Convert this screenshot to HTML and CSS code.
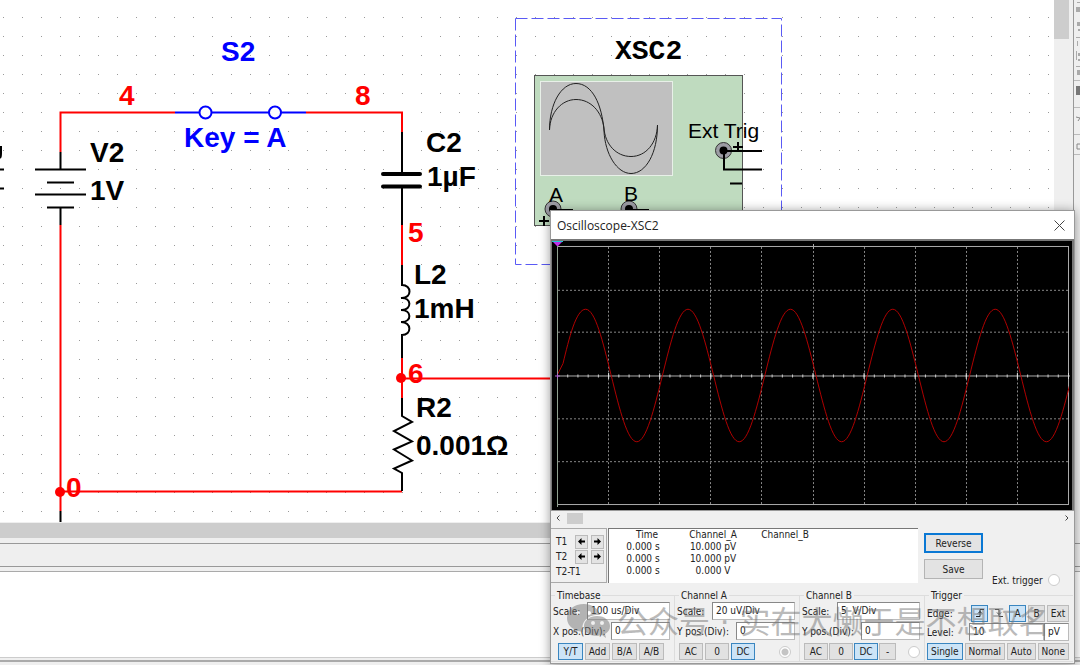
FILE: index.html
```html
<!DOCTYPE html>
<html lang="zh-Hans">
<head>
  <meta charset="UTF-8" />
  <meta name="viewport" content="width=device-width, initial-scale=1.0"/>
  <title>Oscilloscope-XSC2</title>
  <link rel="stylesheet" href="styles.css">
</head>
<body>

<main class="workspace">
  <div class="canvas">
    <svg class="schematic" width="800" height="522" viewBox="0 0 800 522">
      <!-- wires -->
      <g class="wire">
        <path d="M175 112.5H60.5V152M306 112.5H402V132M402 225V265M402 358V398M401 378.5H560M60.5 225V511M60 491.5H402"/>
      </g>
      <circle cx="401" cy="378" r="5" fill="#f00"/>
      <circle cx="60" cy="492" r="5" fill="#f00"/>

      <!-- switch -->
      <g class="switch">
        <path d="M175 112.5H306"/>
        <circle cx="205.5" cy="112.5" r="6"/>
        <circle cx="275" cy="112.5" r="6"/>
      </g>

      <!-- battery, capacitor, inductor, resistor -->
      <g class="part">
        <path d="M60.5 152V169M35 169.5H86M47 182.500H74M35 194.500H86M47 207.500H74M60.5 207V225M60.5 511V522"/>
        <path d="M0 169.500H4M0 188.500H4M0 158Q1 157 1 153V146"/>
        <path d="M402 132V172M402 188V225"/>
        <path class="plate" d="M383 174H420M383 186.500H420"/>
        <path d="M402 265V285C412 285 412 298 402 298H401C412 297 412 310 402 310H401C412 310 412 322 402 322H401C412 322 412 335 402 335V358"/>
        <path d="M402 398V416L412 422L394 431L412 441.500L394 449.500L412 460.500L394 468.500L402 473V491"/>
      </g>

      <g class="label blue">
        <text x="221" y="61">S2</text>
        <text x="184" y="147">Key = A</text>
      </g>
      <g class="label red">
        <text x="119" y="105">4</text>
        <text x="355" y="105">8</text>
        <text x="408" y="242">5</text>
        <text x="408" y="383">6</text>
        <text x="66" y="497">0</text>
      </g>
      <g class="label">
        <text x="90" y="162">V2</text>
        <text x="90" y="200">1V</text>
        <text x="426" y="152">C2</text>
        <text x="427" y="186">1µF</text>
        <text x="414" y="284">L2</text>
        <text x="414" y="318">1mH</text>
        <text x="416" y="417">R2</text>
        <text x="416" y="455">0.001Ω</text>
      </g>

      <!-- oscilloscope symbol -->
      <path class="selection" d="M515.5 18.500H781.500V264.500M515.5 18.500V264.500H781.500"/>
      <text class="label mono" x="615" y="59">XSC2</text>
      <rect x="534.5" y="75.500" width="208" height="150" fill="#bfdbbf" stroke="#555"/>
      <rect x="540.5" y="81.500" width="132" height="94" fill="#c0c0c0" stroke="#e8f0e8"/>
      <g fill="none" stroke="#222">
        <path d="M549.500 130C549.500 104 561 83.500 576 83.500C592 83.500 602 104 604 131C605 154 617 173.500 631 173.500C646 173.500 657.500 153 657.500 125"/>
        <path d="M549.500 130C550 112 562 99.500 576 99.500C591 99.500 602 112 604 128C605 144 616 156.500 631 156.500C646 156.500 657 143 657.500 125"/>
      </g>
      <g fill="#9c9ca4" stroke="#333">
        <circle cx="723.500" cy="150.500" r="8"/>
        <circle cx="553" cy="209" r="8"/>
        <circle cx="629" cy="209" r="8"/>
      </g>
      <circle cx="723.500" cy="150.500" r="4"/>
      <circle cx="553" cy="209" r="4"/>
      <circle cx="629" cy="209" r="4"/>
      <g class="part">
        <path d="M724 151H762M724 151V169.500H762M733 147H743M738 142V152M730 183.500H742M553 210H573M629 210H649M539 221H549M544 216V226"/>
      </g>
      <g class="pin">
        <text x="688" y="138">Ext Trig</text>
        <text x="549" y="202">A</text>
        <text x="624" y="201">B</text>
      </g>
    </svg>
  </div>
  <div class="vscroll"><div class="vthumb"></div></div>
  <svg class="toolbar" width="6" height="522" viewBox="0 0 6 522">
    <g fill="#aaa">
      <path d="M3 2h3v1h-3zM2 7h4v5h-4zM3 22h3v4h-3zM4 29h2v2h-2zM2 37h4v1h-4zM3 41h1v5h-1zM2 51h1v9h-1zM4 53h2v3h-2zM4 59h2v2h-2zM2 66h4v1h-4zM3 70h3v5h-3z"/>
      <path d="M2 86h4v9h-4z" fill="#777"/>
    </g>
    <path d="M0 80.500H6M0 107.500H6M0 134.500H6M0 154.500H6" stroke="#bbb"/>
    <path d="M2 117L6 118L4 121M6 144H3V149H6" fill="none" stroke="#888"/>
  </svg>
</main>
<div class="hscroll"><div class="hthumb"></div></div>
<div class="tabs"></div>
<div class="output"></div>
<div class="status"></div>

<section class="scope">
  <header class="titlebar">
    <h1>Oscilloscope-XSC2</h1>
    <button class="close" aria-label="Close">
      <svg width="11" height="11" viewBox="0 0 11 11"><path d="M.5 .5L10.500 10.500M10.500 .5L.5 10.500" stroke="#444"/></svg>
    </button>
  </header>

  <svg class="screen" viewBox="0 0 520 270" preserveAspectRatio="none">
    <defs>
      <clipPath id="plot"><rect x="5" y="5" width="512" height="260"/></clipPath>
    </defs>
    <g class="grid">
      <path d="M56.500 6V264M107.500 6V264M158.500 6V264M209.500 6V264M261.500 6V264M312.500 6V264M363.500 6V264M414.500 6V264M465.500 6V264"/>
      <path d="M6 49.500H516M6 91.500H516M6 178.500H516M6 221.500H516"/>
    </g>
    <rect class="frame" x="5.500" y="5.500" width="511" height="259"/>
    <path class="frame" d="M5 135.500H518M261.500 3V8"/>
    <!-- axis ticks: small every 1/5 division, tall on the division -->
    <path d="M5 135.500H517" stroke="#ccc" stroke-width="3" stroke-dasharray="1 9.220"/>
    <path d="M5 135.500H517" stroke="#ddd" stroke-width="6" stroke-dasharray="1 50.100"/>
    <path class="trace" clip-path="url(#plot)" d="M5 135L11 123C17 98 24 68.500 33.600 68.500s17.250 32.500 25.600 66.500s16.300 66.500 25.600 66.500s17.250 -32.500 25.600 -66.500s16.300 -66.500 25.600 -66.500s17.250 32.500 25.600 66.500s16.300 66.500 25.600 66.500s17.250 -32.500 25.600 -66.500s16.300 -66.500 25.600 -66.500s17.250 32.500 25.600 66.500s16.300 66.500 25.600 66.500s17.250 -32.500 25.600 -66.500s16.300 -66.500 25.600 -66.500s17.250 32.500 25.600 66.500s16.300 66.500 25.600 66.500s17.250 -32.500 25.600 -66.500s16.300 -66.500 25.600 -66.500s17.250 32.500 25.600 66.500s16.300 66.500 25.600 66.500s17.250 -32.500 25.600 -66.500"/>
    <path d="M5.500 5V267" stroke="#8fa08f"/>
    <path d="M0 0H11L5.500 5.500Z" fill="#c030e8"/>
    <path d="M0 .5H11" stroke="#20c8d8"/>
    <path d="M3 135.500H8M5.500 133V138" stroke="#b060d0"/>
  </svg>

  <div class="timescroll">
    <svg width="4" height="6" viewBox="0 0 4 6"><path d="M3.500 .5L1 3L3.500 5.500" fill="none" stroke="#444"/></svg>
    <div class="timethumb"></div>
    <svg width="4" height="6" viewBox="0 0 4 6"><path d="M.5 .5L3 3L.5 5.500" fill="none" stroke="#444"/></svg>
  </div>

  <div class="readout">
    <div class="cursors">
      <span>T1</span>
      <button aria-label="T1 left"><svg width="7" height="7" viewBox="0 0 7 7"><path d="M0 3.500L3.500 0V2.500H7V4.500H3.500V7Z"/></svg></button>
      <button aria-label="T1 right"><svg width="7" height="7" viewBox="0 0 7 7"><path d="M7 3.500L3.500 0V2.500H0V4.500H3.500V7Z"/></svg></button>
      <span>T2</span>
      <button aria-label="T2 left"><svg width="7" height="7" viewBox="0 0 7 7"><path d="M0 3.500L3.500 0V2.500H7V4.500H3.500V7Z"/></svg></button>
      <button aria-label="T2 right"><svg width="7" height="7" viewBox="0 0 7 7"><path d="M7 3.500L3.500 0V2.500H0V4.500H3.500V7Z"/></svg></button>
      <span class="diff">T2-T1</span>
    </div>
    <div class="values">
      <table>
        <tr><th>Time</th><th>Channel_A</th><th>Channel_B</th></tr>
        <tr><td>0.000 s</td><td>10.000 pV</td><td></td></tr>
        <tr><td>0.000 s</td><td>10.000 pV</td><td></td></tr>
        <tr><td>0.000 s</td><td>0.000 V</td><td></td></tr>
      </table>
    </div>
    <div class="actions">
      <button class="focus">Reverse</button>
      <button>Save</button>
    </div>
    <label class="ext">Ext. trigger <input type="radio" name="ext"></label>
  </div>

  <form class="groups">
    <fieldset>
      <legend>Timebase</legend>
      <div class="row"><label for="tb-scale">Scale:</label><input id="tb-scale" class="scale" value="100 us/Div"></div>
      <div class="row"><label for="tb-pos">X pos.(Div):</label><input id="tb-pos" class="pos" value="0"></div>
      <div class="row buttons time">
        <button type="button" class="on">Y/T</button><button type="button">Add</button><button type="button">B/A</button><button type="button">A/B</button>
      </div>
    </fieldset>
    <fieldset>
      <legend>Channel A</legend>
      <div class="row"><label for="a-scale">Scale:</label><input id="a-scale" class="scale" value="20 uV/Div"></div>
      <div class="row"><label for="a-pos">Y pos.(Div):</label><input id="a-pos" class="pos" value="0"></div>
      <div class="row buttons">
        <button type="button">AC</button><button type="button">0</button><button type="button" class="on">DC</button>
        <input type="radio" name="probe" aria-label="Channel A" checked>
      </div>
    </fieldset>
    <fieldset>
      <legend>Channel B</legend>
      <div class="row"><label for="b-scale">Scale:</label><input id="b-scale" class="scale" value="5  V/Div"></div>
      <div class="row"><label for="b-pos">Y pos.(Div):</label><input id="b-pos" class="pos" value="0"></div>
      <div class="row buttons narrow">
        <button type="button">AC</button><button type="button">0</button><button type="button" class="on">DC</button><button type="button" class="minus">-</button>
        <input type="radio" name="probe" aria-label="Channel B">
      </div>
    </fieldset>
    <fieldset class="trigger">
      <legend>Trigger</legend>
      <div class="row edge">
        <span>Edge:</span>
        <button type="button" class="on" aria-label="Rising edge"><svg width="8" height="8" viewBox="0 0 8 8"><path d="M0 7.500H4V.5H8M2 4.500L4 2.500L6 4.500" fill="none" stroke="#222"/></svg></button>
        <button type="button" class="flat" aria-label="Falling edge"><svg width="8" height="8" viewBox="0 0 8 8"><path d="M0 .5H4V7.500H8M2 3.500L4 5.500L6 3.500" fill="none" stroke="#444"/></svg></button>
        <button type="button" class="on">A</button>
        <button type="button">B</button>
        <button type="button" class="wide">Ext</button>
      </div>
      <div class="row level"><label for="level">Level:</label><input id="level" value="10"><input class="unit" aria-label="Unit" value="pV"></div>
      <div class="row buttons">
        <button type="button" class="on">Single</button><button type="button">Normal</button><button type="button">Auto</button><button type="button">None</button>
      </div>
    </fieldset>
  </form>

  <div class="watermark">
    <svg width="44" height="36" viewBox="0 0 44 36">
      <path fill="#777" fill-rule="evenodd" d="M17 0C7 0 0 6 0 14C0 19 3 23 7 25L5 30L11 27L16 28C13 18 21 10 33 11C31 4 25 0 17 0ZM11 7a2 2 0 1 1 0 4a2 2 0 1 1 0-4ZM22 7a2 2 0 1 1 0 4a2 2 0 1 1 0-4Z"/>
      <path fill="#777" fill-rule="evenodd" d="M30 12C22 12 17 17 17 22C17 28 22 32 30 32L35 31L39 34L38 30C41 28 43 26 43 22C43 17 38 12 30 12ZM26 17a2 2 0 1 1 0 4a2 2 0 1 1 0-4ZM35 17a2 2 0 1 1 0 4a2 2 0 1 1 0-4Z"/>
    </svg>
    <span>公众号 · 实在太懒于是不想取名</span>
  </div>
</section>

</body>
</html>
```
FILE: styles.css
```css
* {
  box-sizing: border-box;
}

body {
  margin: 0;
  min-height: 100vh;
  display: flex;
  flex-direction: column;
  position: relative;
  overflow: hidden;
  background: #efefef;
  color: #222;
  font-family: "DejaVu Sans Condensed", "Noto Sans", sans-serif;
  font-size: 10px;
}

button,
input {
  font: inherit;
  color: inherit;
  margin: 0;
  padding: 0;
  min-width: 0;
}

svg {
  display: block;
}

/* schematic editor */

.workspace {
  display: flex;
}

.canvas {
  flex: 1;
  min-width: 0;
  overflow: hidden;
  background: #fff conic-gradient(from 270deg at 1px 1px, #999 90deg, transparent 0) 3px 17px / 19px 19px;
}

.wire,
.switch,
.part {
  fill: none;
  stroke: #000;
  stroke-width: 2;
}

.wire {
  stroke: #f00;
}

.switch {
  stroke: #00f;
}

.switch circle {
  fill: #fff;
}

.plate {
  stroke-width: 4;
  stroke-linecap: round;
}

.label {
  font: bold 28px "Liberation Sans", Arial, sans-serif;
}

.mono {
  font-family: "Liberation Mono", "Courier New", monospace;
}

.blue {
  fill: #00f;
}

.red {
  fill: #f00;
}

.pin {
  font: 21px "Liberation Sans", Arial, sans-serif;
}

.selection {
  fill: none;
  stroke: #5a5af5;
  stroke-dasharray: 12 4;
}

.vscroll {
  width: 20px;
  padding-right: 4px;
  border-right: 1px solid #999;
}

.vthumb {
  height: 39px;
  background: #cdcdcd;
}

.hscroll {
  height: 22px;
  padding-top: 1px;
  border-bottom: 1px solid #999;
}

.hthumb {
  width: 51%;
  height: 15px;
  background: #cdcdcd;
}

.tabs {
  height: 23px;
  border-bottom: 1px solid #999;
}

.output {
  flex: 1;
  margin-top: 4px;
  background: #fff;
  border-top: 1px solid #aaa;
  border-bottom: 1px solid #ccc;
}

.status {
  height: 7px;
  border-top: 2px solid #efefef;
  box-shadow: inset 0 2px #aaa;
}

/* oscilloscope window */

.scope {
  position: absolute;
  top: 210px;
  left: 550px;
  right: 5px;
  background: #f0f0f0;
  border: 1px solid #999;
  box-shadow: 0 1px 10px rgba(0, 0, 0, 0.4);
}

.titlebar {
  display: flex;
  align-items: center;
  justify-content: space-between;
  height: 28px;
  padding: 0 9px 0 6px;
  background: #fff;
}

h1 {
  margin: 0;
  font: 12px "Open Sans", "Segoe UI", sans-serif;
}

.close {
  border: 0;
  background: none;
}

.screen {
  width: 100%;
  height: 271px;
  background: #000;
  border: solid #777;
  border-width: 2px 2px 0 1px;
}

.grid {
  fill: none;
  stroke: #888;
  stroke-dasharray: 2 2;
}

.frame {
  fill: none;
  stroke: #aaa;
}

.trace {
  fill: none;
  stroke: #b00000;
}

.timescroll {
  display: flex;
  align-items: center;
  height: 18px;
  padding: 0 5px 3px;
  border-top: 1px solid #999;
}

.timethumb {
  width: 16px;
  height: 11px;
  margin: 0 auto 0 7px;
  background: #cdcdcd;
}

.readout {
  display: flex;
  height: 55px;
}

.cursors {
  display: grid;
  grid-template-columns: 17px 14px 14px;
  grid-template-rows: 15px 15px 15px;
  gap: 0 2px;
  align-items: center;
  width: 56px;
  padding: 5px 0 0 5px;
  border: solid #aaa;
  border-width: 1px 1px 1px 0;
}

.cursors button {
  display: flex;
  align-items: center;
  justify-content: center;
  width: 13px;
  height: 14px;
  border: 1px solid #bbb;
  background: #e3e3e3;
}

.diff {
  grid-column: 1 / 4;
  line-height: 18px;
}

.values {
  width: 310px;
  margin-left: 1px;
  background: #fff;
  border: solid #777;
  border-width: 1px 0 0 1px;
}

table {
  border-collapse: collapse;
  line-height: 12px;
  text-align: center;
}

th,
td {
  width: 72px;
  padding: 0;
  font-weight: normal;
}

th:first-child,
td:first-child {
  width: 68px;
}

th:first-child {
  padding-left: 8px;
}

.actions {
  display: flex;
  flex-direction: column;
  gap: 6px;
  width: 59px;
  margin: 5px 9px 0 6px;
}

.actions button {
  height: 20px;
  border: 1px solid #b4b4b4;
  background: #e3e3e3;
}

.actions .focus {
  border: 2px solid #0a78d4;
}

.ext {
  display: flex;
  align-items: center;
  gap: 5px;
  align-self: flex-end;
  margin-bottom: -3px;
}

input[type="radio"] {
  appearance: none;
  width: 12px;
  height: 12px;
  border: 1px solid #ccc;
  border-radius: 50%;
  background: #fff;
}

input[type="radio"]:checked {
  background: radial-gradient(#c4c4c4 3px, #fff 4px);
}

.groups {
  display: grid;
  grid-template-columns: 124px 125px 125px 1fr;
  padding: 6px 1px 1px 0;
}

fieldset {
  min-width: 0;
  margin: 0;
  padding: 0 4px 1px 2px;
  border: 1px solid #ddd;
  border-left: 0;
}

fieldset:last-child {
  border-right: 0;
}

legend {
  height: 13px;
  margin-left: 2px;
  padding: 0 2px;
  line-height: 13px;
}

.row {
  display: flex;
  align-items: center;
  justify-content: space-between;
  height: 18px;
  margin-bottom: 2px;
  white-space: nowrap;
}

.row > input:not([type="radio"]) {
  height: 18px;
  padding: 0 3px 2px;
  border: 1px solid #888;
  border-color: #888 #bbb #bbb #888;
  border-radius: 0;
  background: #fff;
  white-space: pre;
}

.scale {
  width: 83px;
}

.pos {
  width: 59px;
}

.buttons {
  justify-content: flex-start;
  gap: 2px;
  height: 17px;
  margin: 3px 4px 0 2px;
}

.row button {
  display: flex;
  align-items: center;
  justify-content: center;
  width: 24px;
  height: 17px;
  border: 1px solid #bbb;
  background: #e1e1e1;
}

.time {
  margin: 3px 0 0 5px;
}

.time button {
  width: 25px;
}

.row .on {
  border-color: #3a86c0;
  background: #cce4f7;
}

.narrow {
  gap: 1px;
  margin-right: 0;
}

.row .minus {
  width: 17px;
}

.row input[type="radio"] {
  margin-left: auto;
}

.edge {
  gap: 2px;
  margin: 2px 0 1px;
}

.edge span {
  flex: 1;
}

.edge button {
  width: 17px;
}

.edge .flat {
  border-color: #eee;
  background: #eee;
}

.edge .wide {
  width: 22px;
}

.level {
  margin-bottom: 0;
}

.level label {
  flex: 1;
}

.level input {
  width: 75px;
}

.level .unit {
  width: 25px;
}

.trigger .buttons {
  margin: 2px 0 0;
}

.trigger .buttons button {
  flex: 1 1 auto;
  width: auto;
}

.watermark {
  position: absolute;
  left: 16px;
  bottom: 21px;
  display: flex;
  align-items: center;
  gap: 6px;
  color: #777;
  font: 31px/40px "DejaVu Sans", "Noto Sans CJK SC", sans-serif;
  white-space: nowrap;
  opacity: 0.5;
  pointer-events: none;
}
```
